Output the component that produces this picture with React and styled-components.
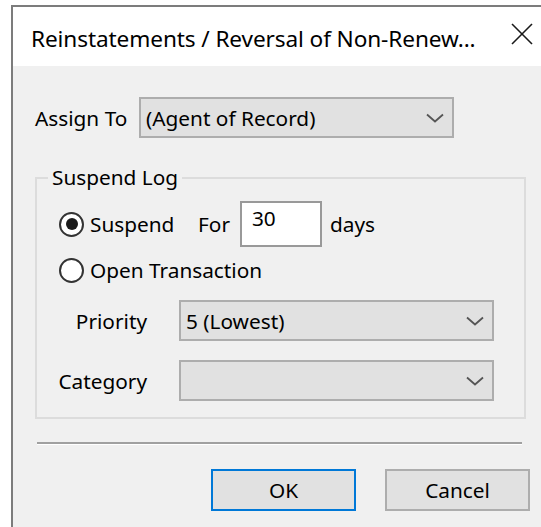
import React from 'react'
import styled, { createGlobalStyle } from 'styled-components'

const Global = createGlobalStyle`
  html, body {
    margin: 0;
    padding: 0;
    background: #fff;
    overflow: hidden;
  }
  body {
    font-family: "Noto Sans", "Open Sans", sans-serif;
    color: #000;
  }
`

const Window = styled.div`
  box-sizing: border-box;
  margin: 5px 0 0 11px;
  width: calc(100vw - 11px);
  height: calc(100vh - 5px);
  border-left: 2px solid #7c7c7c;
  border-top: 2px solid #7c7c7c;
  background: #f0f0f0;
  display: flex;
  flex-direction: column;
  overflow: hidden;
`

const TitleBar = styled.div`
  flex: none;
  height: 59px;
  background: #fff;
  display: flex;
  align-items: center;
  padding: 4px 0 0 18px;
  box-sizing: border-box;
  font-size: 22.6px;
  letter-spacing: -0.1px;
`

const Title = styled.div`
  width: 480px;
  white-space: nowrap;
`

const CloseBtn = styled.svg`
  width: 22px;
  height: 22px;
  margin-top: -10px;
  stroke: #1a1a1a;
  stroke-width: 1.6;
`

const Body = styled.div`
  padding: 31px 0 0 22px;
  display: flex;
  flex-direction: column;
`

const Row = styled.div`
  display: flex;
  align-items: center;
`

const Label = styled.span`
  font-size: 20.8px;
  white-space: nowrap;
  width: ${p => p.$w || 'auto'};
  text-align: ${p => p.$align || 'left'};
  margin-left: ${p => p.$ml || 0};
`

const Combo = styled.div`
  box-sizing: border-box;
  width: 315px;
  height: 41px;
  background: #e1e1e1;
  border: 2px solid #adadad;
  display: flex;
  align-items: center;
  justify-content: space-between;
  padding: 0 8px 0 5px;
  margin-left: ${p => p.$ml || 0};
  font-size: 20.8px;
`

const Chevron = styled.svg`
  width: 18px;
  height: 10px;
  fill: none;
  stroke: #555;
  stroke-width: 1.8;
`

const Group = styled.fieldset`
  box-sizing: border-box;
  width: 491px;
  margin: 26px 0 0 0;
  padding: 10px 0 16px 0;
  border: 2px solid #dcdcdc;
  min-inline-size: 0;
`

const Legend = styled.legend`
  font-size: 20.8px;
  margin-left: 11px;
  padding: 0 4px;
  line-height: 27px;
`

const RadioRow = styled.div`
  display: flex;
  align-items: center;
  padding-left: 22px;
  height: ${p => p.$h || '30px'};
  margin-top: ${p => p.$mt || 0};
`

const Radio = styled.span`
  box-sizing: border-box;
  flex: none;
  width: 25px;
  height: 25px;
  border-radius: 50%;
  border: 2px solid #333;
  background: #fff;
  display: flex;
  align-items: center;
  justify-content: center;
  margin-right: 6px;

  &::after {
    content: '';
    width: 12px;
    height: 12px;
    border-radius: 50%;
    background: #1a1a1a;
    display: ${p => (p.$checked ? 'block' : 'none')};
  }
`

const DaysInput = styled.div`
  box-sizing: border-box;
  width: 82px;
  height: 46px;
  background: #fff;
  border: 2px solid #999;
  font-size: 20.8px;
  padding: 1px 0 0 10px;
  margin: 0 8px 0 10px;
`

const FieldRow = styled(Row)`
  margin-top: ${p => p.$mt || 0};
`

const Separator = styled.div`
  width: 485px;
  margin: 23px 0 0 2px;
  border-top: 2px solid #a0a0a0;
  border-bottom: 1px solid #fff;
`

const Buttons = styled.div`
  display: flex;
  gap: 29px;
  padding-left: 176px;
  margin-top: 24px;
`

const Button = styled.button`
  box-sizing: border-box;
  width: 145px;
  height: 42px;
  background: #e1e1e1;
  border: 2px solid ${p => (p.$default ? '#0078d7' : '#adadad')};
  font-family: inherit;
  font-size: 20.8px;
  color: #000;
  padding: 0;
`

const ChevronIcon = () => (
  <Chevron viewBox="0 0 18 10">
    <polyline points="1,1.5 9,8.5 17,1.5" />
  </Chevron>
)

export default function App() {
  return (
    <>
      <Global />
      <Window>
        <TitleBar>
          <Title>Reinstatements / Reversal of Non-Renew...</Title>
          <CloseBtn viewBox="0 0 22 22">
            <line x1="1" y1="1" x2="21" y2="21" />
            <line x1="21" y1="1" x2="1" y2="21" />
          </CloseBtn>
        </TitleBar>
        <Body>
          <Row>
            <Label $w="104px">Assign To</Label>
            <Combo>
              <span>(Agent of Record)</span>
              <ChevronIcon />
            </Combo>
          </Row>

          <Group>
            <Legend>Suspend Log</Legend>
            <RadioRow $h="46px">
              <Radio $checked />
              <Label $w="108px">Suspend</Label>
              <Label>For</Label>
              <DaysInput>30</DaysInput>
              <Label>days</Label>
            </RadioRow>
            <RadioRow $mt="8px">
              <Radio />
              <Label>Open Transaction</Label>
            </RadioRow>
            <FieldRow $mt="15px">
              <Label $w="89px" $align="right" $ml="21px">Priority</Label>
              <Combo $ml="32px">
                <span>5 (Lowest)</span>
                <ChevronIcon />
              </Combo>
            </FieldRow>
            <FieldRow $mt="19px">
              <Label $w="89px" $align="right" $ml="21px">Category</Label>
              <Combo $ml="32px">
                <span />
                <ChevronIcon />
              </Combo>
            </FieldRow>
          </Group>

          <Separator />

          <Buttons>
            <Button $default>OK</Button>
            <Button>Cancel</Button>
          </Buttons>
        </Body>
      </Window>
    </>
  )
}
